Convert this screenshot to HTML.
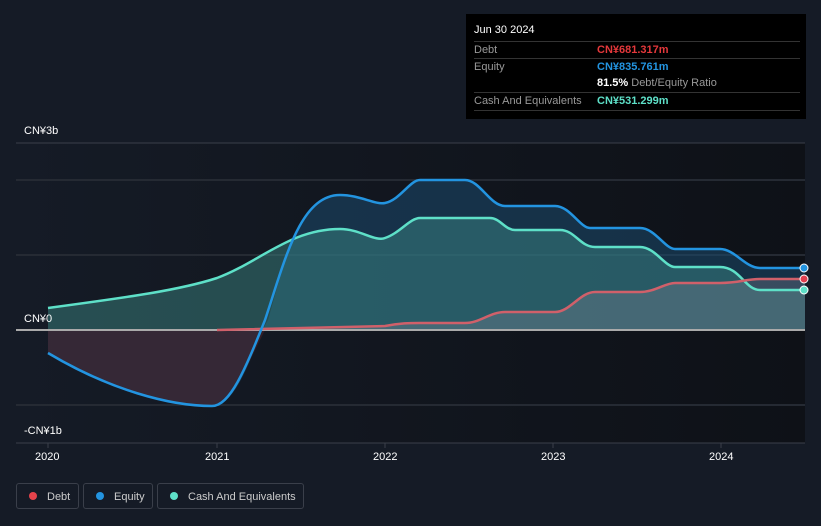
<!DOCTYPE html><html><head><style>
body{margin:0;width:821px;height:526px;background:#151b26;font-family:"Liberation Sans",sans-serif;overflow:hidden;position:relative}
.tt{position:absolute;left:466px;top:14px;width:340px;height:105px;background:#000;color:#fff;font-size:11px}
.tt .r{position:absolute;left:8px;right:6px;height:17px;border-top:1px solid #333;line-height:17px;color:#999}
.tt .v{position:absolute;left:123px;font-weight:bold}
.lg{position:absolute;top:483px;height:26px;border:1px solid #3a3f4a;border-radius:3px;color:#ccc;font-size:11px;line-height:26px;box-sizing:border-box}
.lg i{display:inline-block;width:8px;height:8px;border-radius:50%;margin:0 10px 0 12px;vertical-align:-0px}
.lab{position:absolute;color:#fff;font-size:11px}
</style></head><body>
<svg width="821" height="526" style="position:absolute;left:0;top:0">
<defs><linearGradient id="ga" x1="0" y1="0" x2="1" y2="0"><stop offset="0" stop-color="#151b26"/><stop offset="1" stop-color="#0e1117"/></linearGradient></defs>
<rect x="16" y="143" width="789" height="300" fill="url(#ga)"/>
<g stroke="#252a33" stroke-width="2"><line x1="16" y1="180" x2="805" y2="180"/><line x1="16" y1="255" x2="805" y2="255"/><line x1="16" y1="405" x2="805" y2="405"/></g>
<line x1="16" y1="143" x2="805" y2="143" stroke="#3a3f4a"/>
<line x1="16" y1="443" x2="805" y2="443" stroke="#3a3f4a"/>
<g stroke="#3a3f4a"><line x1="48" y1="443" x2="48" y2="448"/><line x1="217" y1="443" x2="217" y2="448"/><line x1="385" y1="443" x2="385" y2="448"/><line x1="553" y1="443" x2="553" y2="448"/><line x1="721" y1="443" x2="721" y2="448"/></g>
<path d="M48,353 C110,390 170,406 212,406 C240,406 255,340 268,320 C285,260 300,195 340,195 C360,195 375,205 385,203 C400,200 410,180 420,180 L465,180 C480,180 490,206 505,206 L555,206 C570,206 580,228 590,228 L640,228 C655,228 665,249 675,249 L720,249 C735,249 745,268 760,268 L805,268 L805,330 L48,330Z" fill="#1c4a6e" opacity="0.55"/>
<path d="M48,353 C110,390 170,406 212,406 C230,406 245,370 265,330 L48,330Z" fill="#4a2228" opacity="0.6"/>
<path d="M48,308 C130,297 180,290 217,278 C260,262 290,229 340,229 C360,229 375,242 385,238 C400,233 410,218 420,218 L490,218 C500,218 505,230 515,230 L560,230 C575,230 580,247 595,247 L640,247 C655,247 665,267 675,267 L720,267 C740,267 745,290 760,290 L805,290 L805,330 L48,330Z" fill="#3f8f8a" opacity="0.45"/>
<path d="M217,330 L385,326 C400,323 410,323 420,323 L465,323 C480,323 490,312 505,312 L555,312 C570,312 580,292 595,292 L640,292 C655,292 665,283 675,283 L720,283 C740,283 745,279 760,279 L805,279 L805,330Z" fill="#8a8a9a" opacity="0.3"/>
<line x1="16" y1="330" x2="805" y2="330" stroke="#aaa" stroke-width="2"/>
<path d="M48,308 C130,297 180,290 217,278 C260,262 290,229 340,229 C360,229 375,242 385,238 C400,233 410,218 420,218 L490,218 C500,218 505,230 515,230 L560,230 C575,230 580,247 595,247 L640,247 C655,247 665,267 675,267 L720,267 C740,267 745,290 760,290 L805,290" fill="none" stroke="#5ee0c8" stroke-width="2.5"/>
<path d="M217,330 L385,326 C400,323 410,323 420,323 L465,323 C480,323 490,312 505,312 L555,312 C570,312 580,292 595,292 L640,292 C655,292 665,283 675,283 L720,283 C740,283 745,279 760,279 L805,279" fill="none" stroke="#d0606a" stroke-width="2.5"/>
<path d="M48,353 C110,390 170,406 212,406 C230,406 245,370 265,320 C285,260 300,195 340,195 C360,195 375,205 385,203 C400,200 410,180 420,180 L465,180 C480,180 490,206 505,206 L555,206 C570,206 580,228 590,228 L640,228 C655,228 665,249 675,249 L720,249 C735,249 745,268 760,268 L805,268" fill="none" stroke="#2394e0" stroke-width="2.5"/>
<circle cx="804" cy="268" r="4" fill="#2394e0" stroke="#fff"/>
<circle cx="804" cy="279" r="4" fill="#e04050" stroke="#fff"/>
<circle cx="804" cy="290" r="4" fill="#5ee0c8" stroke="#fff"/>
</svg>
<div class="lab" style="left:24px;top:125px">CN¥3b</div>
<div class="lab" style="left:24px;top:313px">CN¥0</div>
<div class="lab" style="left:24px;top:425px">-CN¥1b</div>
<div class="lab" style="left:35px;top:451px">2020</div>
<div class="lab" style="left:205px;top:451px">2021</div>
<div class="lab" style="left:373px;top:451px">2022</div>
<div class="lab" style="left:541px;top:451px">2023</div>
<div class="lab" style="left:709px;top:451px">2024</div>
<div class="tt">
<div style="position:absolute;left:8px;top:10px;font-size:11px">Jun 30 2024</div>
<div class="r" style="top:27px">Debt<span class="v" style="color:#e5383b">CN¥681.317m</span></div>
<div class="r" style="top:44px">Equity<span class="v" style="color:#2394e0">CN¥835.761m</span></div>
<div class="r" style="top:61px;border-top:none"><span class="v" style="color:#fff">81.5% <span style="color:#999;font-weight:normal">Debt/Equity Ratio</span></span></div>
<div class="r" style="top:78px;border-bottom:1px solid #333">Cash And Equivalents<span class="v" style="color:#5ee0c8">CN¥531.299m</span></div>
</div>
<div class="lg" style="left:16px;width:63px"><i style="background:#e5434b"></i>Debt</div>
<div class="lg" style="left:83px;width:70px"><i style="background:#2394e0"></i>Equity</div>
<div class="lg" style="left:157px;width:147px"><i style="background:#5ee0c8"></i>Cash And Equivalents</div>
</body></html>
